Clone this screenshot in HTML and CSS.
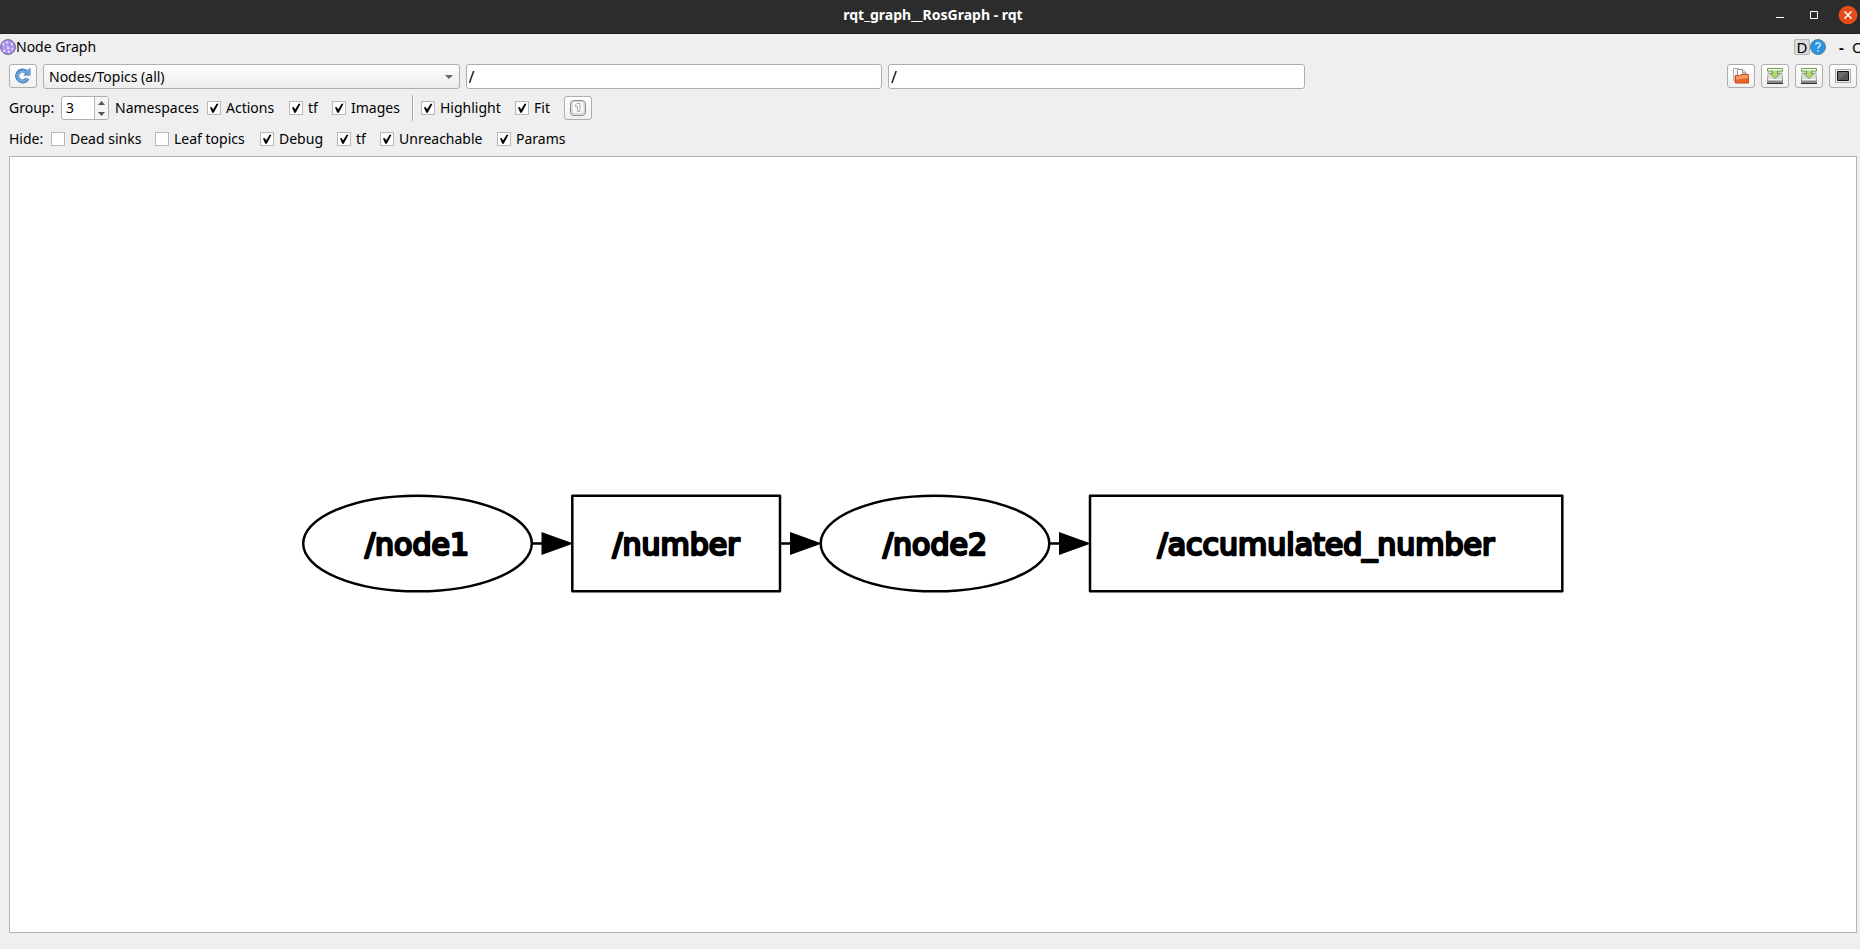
FILE: index.html
```html
<!DOCTYPE html>
<html lang="en">
<head>
<meta charset="utf-8">
<title>rqt_graph__RosGraph - rqt</title>
<link rel="stylesheet" href="styles.css">
</head>
<body>
<header class="titlebar">
  <h1 class="titlebar-text">rqt_graph__RosGraph - rqt</h1>
  <div class="window-controls">
    <button class="win-btn" aria-label="Minimize"><svg width="20" height="20" viewBox="0 0 20 20"><path d="M6 12.500h8" stroke="#fff" fill="none"/></svg></button>
    <button class="win-btn" aria-label="Maximize"><svg width="20" height="20" viewBox="0 0 20 20"><path d="M6.500 6.500h7v7h-7z" stroke="#fff" fill="none"/></svg></button>
    <button class="win-btn" aria-label="Close"><svg width="20" height="20" viewBox="0 0 20 20"><circle cx="10" cy="10" r="9.300" fill="#e54d18"/><path d="M6.500 6.500l7 7m0-7l-7 7" stroke="#fff" stroke-width="1.500" fill="none"/></svg></button>
  </div>
</header>

<section class="dock-title">
  <svg width="16" height="16" viewBox="0 0 16 16"><circle cx="8" cy="8" r="7.500" fill="#a58ae8" stroke="#77718c"/><path d="M3 5l4-2 5 2 1 5-4 3-5-1-1-7 5 4 5-4M4 12l4-3 5 1M7 3l1 6 1 4" stroke="#c4b2f6" stroke-width=".8" fill="none"/><g fill="#efe9ff"><circle cx="3.500" cy="5" r="1"/><circle cx="7" cy="3.200" r=".9"/><circle cx="12" cy="5" r="1"/><circle cx="8" cy="9" r="1.100"/><circle cx="12.500" cy="10" r=".9"/><circle cx="4" cy="12" r=".9"/><circle cx="9" cy="13" r=".9"/></g></svg>
  <h2 class="dock-name">Node Graph</h2>
  <div class="dock-tools">
    <button class="d-btn">D</button>
    <button class="flat" aria-label="Help"><svg width="16" height="16" viewBox="0 0 16 16"><circle cx="8" cy="8" r="7.500" fill="#2b93e0" stroke="#5d7f99"/><path d="M5.700 5.600C6 3.200 10.500 3.200 10.300 5.800 10.200 7.500 8 7.600 8 9.800M8 11.200v1.500" stroke="#d9efff" stroke-width="1.400" fill="none"/></svg></button>
    <button class="flat dash">-</button>
    <button class="flat">O</button>
  </div>
</section>

<main class="panel">
  <div class="row filters">
    <button class="tool" aria-label="Refresh"><svg width="18" height="18" viewBox="0 0 18 18"><path d="M13.500 11.500A5.500 5.500 0 1 1 12 4.600" stroke="#427fb8" stroke-width="4" fill="none"/><path d="M16.500 1v7.500H9.200l2.400-2.500-1-2L13.500 3z" fill="#427fb8"/><path d="M13.200 11.600A5.200 5.200 0 1 1 12 5.200l3.200-1.800v4.100h-3" stroke="#6fa9db" stroke-width="2.200" fill="none"/></svg></button>
    <div class="combo">
      <select aria-label="Graph type"><option>Nodes/Topics (all)</option></select>
      <svg class="combo-arrow" width="8" height="4" viewBox="0 0 8 4"><path d="M0 0h8L4 4z" fill="#666"/></svg>
    </div>
    <input class="field" type="text" value="/" aria-label="Node filter">
    <input class="field" type="text" value="/" aria-label="Topic filter">
    <div class="file-tools">
      <button class="tool" aria-label="Load DOT"><svg width="18" height="18" viewBox="0 0 18 18"><path d="M1.500 14V1.500h5l2 2V8" fill="#f4f4f4" stroke="#aaa"/><path d="M5.500 11V2.500H11L14 5.500V9H5.500" fill="#fff" stroke="#999"/><path d="M10.500 2.500v3.500H14" stroke="#888" fill="#eee"/><path d="M1 13.500L3.500 16V9L1 10z" fill="#c9bab2"/><path d="M3.500 8.500h4.500l1-1h7.500v8.500h-13z" fill="#e96427" stroke="#c54c19"/><path d="M4 9h4.500l1-1H16v3L4 12.500z" fill="#f79a68"/></svg></button>
      <button class="tool" aria-label="Save as DOT"><svg width="18" height="18" viewBox="0 0 18 18"><path d="M2.500 3L1.500 11.500v5h15v-5L15.500 3z" fill="#ddd" stroke="#aaa"/><path d="M1 12h16v4H1z" fill="#888"/><path d="M2 12h14v1.500H2z" fill="#f5f5f5"/><path d="M1 16.500h16" stroke="#333"/><path d="M1.500 1.500h15v2.500h-15z" fill="#fff" stroke="#6da040"/><path d="M6.500 2.500h5v4H14L9 11.500 4 6.500h2.500z" fill="#b4da78" stroke="#699c38"/><path d="M6 2h6v1.500H6z" fill="#fff"/></svg></button>
      <button class="tool" aria-label="Save as SVG"><svg width="18" height="18" viewBox="0 0 18 18"><path d="M2.500 3L1.500 11.500v5h15v-5L15.500 3z" fill="#ddd" stroke="#aaa"/><path d="M1 12h16v4H1z" fill="#888"/><path d="M2 12h14v1.500H2z" fill="#f5f5f5"/><path d="M1 16.500h16" stroke="#333"/><path d="M1.500 1.500h15v2.500h-15z" fill="#fff" stroke="#6da040"/><path d="M6.500 2.500h5v4H14L9 11.500 4 6.500h2.500z" fill="#b4da78" stroke="#699c38"/><path d="M6 2h6v1.500H6z" fill="#fff"/></svg></button>
      <button class="tool" aria-label="Save as image"><svg width="18" height="18" viewBox="0 0 18 18"><path d="M1.500 2.500h15v13h-15z" fill="#eee" stroke="#aaa"/><path d="M3.500 4.500h11v9h-11z" fill="#555" stroke="#111"/><path d="M4 13V5h10z" fill="#6b6b6b"/></svg></button>
    </div>
  </div>

  <div class="row group-row">
    <label for="group">Group:</label>
    <div class="spin">
      <input id="group" type="number" value="3">
      <div class="spin-buttons">
        <button aria-label="Increase"><svg width="7" height="4" viewBox="0 0 7 4"><path d="M0 4h7L3.500 0z" fill="#555"/></svg></button>
        <button aria-label="Decrease"><svg width="7" height="4" viewBox="0 0 7 4"><path d="M0 0h7L3.500 4z" fill="#555"/></svg></button>
      </div>
    </div>
    <span>Namespaces</span>
    <label class="check"><input type="checkbox" checked>Actions</label>
    <label class="check"><input type="checkbox" checked>tf</label>
    <label class="check"><input type="checkbox" checked>Images</label>
    <div class="separator"></div>
    <label class="check"><input type="checkbox" checked>Highlight</label>
    <label class="check"><input type="checkbox" checked>Fit</label>
    <button class="tool" aria-label="Fit in view"><svg width="18" height="18" viewBox="0 0 18 18"><rect x="1.500" y="1.500" width="15" height="15" rx="3.500" fill="#e4e4e2" stroke="#8a8a88"/><rect x="3" y="2.500" width="12" height="12" rx="2.500" fill="#fafafa" stroke="#d4d4d2"/><path d="M6.500 7.500V6l1.500-1.500h3v8H8.500v-5z" fill="#fff" stroke="#aaa"/></svg></button>
  </div>

  <div class="row hide-row">
    <span>Hide:</span>
    <label class="check"><input type="checkbox">Dead sinks</label>
    <label class="check"><input type="checkbox">Leaf topics</label>
    <label class="check"><input type="checkbox" checked>Debug</label>
    <label class="check"><input type="checkbox" checked>tf</label>
    <label class="check"><input type="checkbox" checked>Unreachable</label>
    <label class="check"><input type="checkbox" checked>Params</label>
  </div>

  <div class="canvas">
    <svg class="graph" viewBox="0 0 1846 775" role="img" aria-label="ROS node graph">
      <g class="shape">
        <ellipse cx="407.500" cy="386.500" rx="114.300" ry="47.800"/>
        <rect x="562.300" y="338.800" width="207.700" height="95.500"/>
        <ellipse cx="925" cy="386.500" rx="114.300" ry="47.800"/>
        <rect x="1080" y="338.800" width="472.300" height="95.500"/>
        <path d="M521 386.500h12M770 386.500h12M1039 386.500h12"/>
      </g>
      <g class="arrow">
        <path d="M532.500 376.500l28 10-28 10z"/>
        <path d="M781 376.500l28 10-28 10z"/>
        <path d="M1050 376.500l28 10-28 10z"/>
      </g>
      <g class="node-label">
        <text x="407" y="398">/node1</text>
        <text x="666" y="398">/number</text>
        <text x="925" y="398">/node2</text>
        <text x="1316" y="398">/accumulated_number</text>
      </g>
    </svg>
  </div>
</main>
</body>
</html>
```
FILE: styles.css
```css
* { box-sizing: border-box; }

body {
  margin: 0;
  height: 100vh;
  display: flex;
  flex-direction: column;
  overflow: hidden;
  background: #efefef;
  color: #000;
  font: 14px/20px "Noto Sans", "Open Sans", sans-serif;
}

button, input, select {
  font: inherit;
  color: inherit;
  margin: 0;
  padding: 0;
}

svg { display: block; }

.titlebar {
  display: grid;
  grid-template-columns: 1fr auto 1fr;
  align-items: center;
  height: 34px;
  padding: 0 2px 3px 8px;
  background: #2c2c2c;
  border-bottom: 1px solid #251f24;
  color: #fff;
}

.titlebar-text {
  grid-column: 2;
  margin: 0;
  font-size: 14px;
  font-weight: 700;
}

.window-controls {
  display: flex;
  justify-content: flex-end;
  gap: 14px;
}

.win-btn, .flat {
  border: 0;
  background: none;
}

.dock-title {
  display: flex;
  align-items: center;
  height: 26px;
}

.dock-name {
  margin: 0;
  font-size: 14px;
  font-weight: 400;
}

.dock-tools {
  display: flex;
  align-items: center;
  width: 66px;
  margin-left: auto;
  font-size: 15px;
}

.dock-tools button { flex: none; }

.d-btn {
  width: 16px;
  height: 16px;
  line-height: 14px;
  border: 1px solid #b4b4b4;
  border-radius: 2px;
  background: #dcdcdc;
}

.dash {
  width: 26px;
  padding-left: 5px;
  font-weight: 700;
}

.panel {
  flex: 1;
  display: flex;
  flex-direction: column;
  padding: 4px 3px 16px 9px;
}

.row {
  display: grid;
  flex: none;
  align-items: center;
}

.filters {
  grid-template-columns: 28px 1fr 1fr 1fr 1fr 124px;
  align-items: start;
  gap: 6px;
}

.file-tools {
  grid-column: 6;
  display: flex;
  justify-content: flex-end;
  gap: 6px;
}

.tool {
  flex: none;
  display: grid;
  place-items: center;
  width: 28px;
  height: 24px;
  border: 1px solid #aeaeae;
  border-radius: 3px;
  background: linear-gradient(#fff, #f0f0f0);
}

.combo { position: relative; }

.combo select {
  display: block;
  appearance: none;
  width: 100%;
  height: 25px;
  padding-left: 5px;
  border: 1px solid #aeaeae;
  border-radius: 3px;
  background: linear-gradient(#fdfdfd, #ededed);
}

.combo-arrow {
  position: absolute;
  right: 7px;
  top: 11px;
  pointer-events: none;
}

.field {
  width: 100%;
  height: 25px;
  padding: 0 2px;
  border: 1px solid #aeaeae;
  border-radius: 3px;
  background: #fff;
  font-size: 16px;
}

.group-row {
  grid-template-columns: 52px 54px 92px 82px 43px 80px 9px 94px 49px 28px;
  height: 26px;
  margin-top: 6px;
}

.spin {
  display: flex;
  width: 48px;
  height: 24px;
  border: 1px solid #aeaeae;
  border-radius: 3px;
  background: #fff;
  overflow: hidden;
}

.spin input {
  appearance: textfield;
  width: 32px;
  padding-left: 4px;
  border: 0;
  background: none;
}

.spin input::-webkit-inner-spin-button { appearance: none; }

.spin-buttons {
  flex: 1;
  display: grid;
  border-left: 1px solid #b8b8b8;
  background: #f5f5f5;
}

.spin-buttons button {
  display: grid;
  place-items: center;
  border: 0;
  background: none;
}

.check {
  display: flex;
  align-items: center;
  gap: 5px;
  white-space: nowrap;
}

.check input {
  appearance: none;
  flex: none;
  width: 14px;
  height: 14px;
  border: 1px solid #b8b8b8;
  background: #fff;
}

.check input:checked::before {
  content: "";
  display: block;
  width: 12px;
  height: 12px;
  background: #000;
  clip-path: polygon(16% 45%, 32% 42%, 42% 62%, 72% 14%, 88% 14%, 48% 90%, 36% 90%);
}

.separator {
  width: 2px;
  height: 26px;
  background: #a6a6a6;
  border-right: 1px solid #fff;
}

.hide-row {
  grid-template-columns: 42px 104px 105px 77px 43px 117px auto;
  justify-content: start;
  height: 20px;
  margin-top: 8px;
}

.canvas {
  flex: 1;
  min-height: 0;
  margin-top: 7px;
  border: 1px solid #b4b4b4;
  background: #fff;
}

.graph {
  width: 100%;
  height: 100%;
}

.shape {
  fill: none;
  stroke: #000;
  stroke-width: 2.5px;
  stroke-linejoin: round;
}

.arrow {
  fill: #000;
  stroke: #000;
  stroke-width: 2px;
}

.node-label {
  font: 30px "DejaVu Sans", sans-serif;
  text-anchor: middle;
  fill: #000;
  stroke: #000;
  stroke-width: 2.5px;
  stroke-linejoin: round;
}
```
